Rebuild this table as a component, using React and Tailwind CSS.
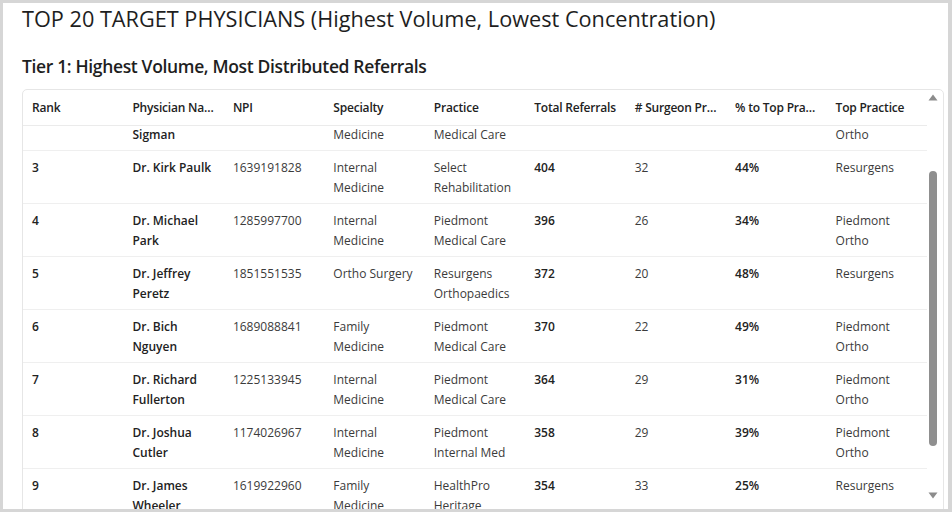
import React from "react";

const rows = [
  { rank: 3, name: ["Dr. Kirk Paulk"], npi: "1639191828", spec: ["Internal", "Medicine"], prac: ["Select", "Rehabilitation"], total: 404, surg: 32, pct: "44%", top: ["Resurgens"] },
  { rank: 4, name: ["Dr. Michael", "Park"], npi: "1285997700", spec: ["Internal", "Medicine"], prac: ["Piedmont", "Medical Care"], total: 396, surg: 26, pct: "34%", top: ["Piedmont", "Ortho"] },
  { rank: 5, name: ["Dr. Jeffrey", "Peretz"], npi: "1851551535", spec: ["Ortho Surgery"], prac: ["Resurgens", "Orthopaedics"], total: 372, surg: 20, pct: "48%", top: ["Resurgens"] },
  { rank: 6, name: ["Dr. Bich", "Nguyen"], npi: "1689088841", spec: ["Family", "Medicine"], prac: ["Piedmont", "Medical Care"], total: 370, surg: 22, pct: "49%", top: ["Piedmont", "Ortho"] },
  { rank: 7, name: ["Dr. Richard", "Fullerton"], npi: "1225133945", spec: ["Internal", "Medicine"], prac: ["Piedmont", "Medical Care"], total: 364, surg: 29, pct: "31%", top: ["Piedmont", "Ortho"] },
  { rank: 8, name: ["Dr. Joshua", "Cutler"], npi: "1174026967", spec: ["Internal", "Medicine"], prac: ["Piedmont", "Internal Med"], total: 358, surg: 29, pct: "39%", top: ["Piedmont", "Ortho"] },
  { rank: 9, name: ["Dr. James", "Wheeler"], npi: "1619922960", spec: ["Family", "Medicine"], prac: ["HealthPro", "Heritage"], total: 354, surg: 33, pct: "25%", top: ["Resurgens"] },
];

const headers = ["Rank", "Physician Name", "NPI", "Specialty", "Practice", "Total Referrals", "# Surgeon Practices", "% to Top Practice", "Top Practice"];

function Cell({ children, bold }) {
  return (
    <div className={`pl-[9px] pr-[6px] ${bold ? "font-semibold text-[#222]" : "text-[#3b3b3b]"}`}>
      {Array.isArray(children) ? children.map((l, i) => <div key={i}>{l}</div>) : children}
    </div>
  );
}

export default function App() {
  return (
    <div
      className="w-[952px] h-[512px] bg-white border-t-[3px] border-l-[3px] border-r-[4px] border-b-[3px] border-[#d6d6d6] overflow-hidden"
      style={{ fontFamily: "'Open Sans', 'Noto Sans', sans-serif" }}
    >
      <div className="pl-[19px] pt-px">
        <h1 className="text-[21.7px] leading-[30px] text-[#1e1e1e]">
          TOP 20 TARGET PHYSICIANS (Highest Volume, Lowest Concentration)
        </h1>
        <h2 className="mt-[20px] text-[17.5px] leading-[24px] font-semibold tracking-[-0.35px] text-[#1e1e1e]">
          Tier 1: Highest Volume, Most Distributed Referrals
        </h2>

        {/* table + scrollbar */}
        <div className="mt-[11px] w-[922px] h-[460px] flex border border-[#e6e6e6] rounded-[5px] overflow-hidden text-[12px] leading-[20px]">
          <div className="w-[904px] flex flex-col">
            <div className="grid grid-cols-9 h-[36px] pt-[8px] border-b border-[#ebebeb] font-semibold text-[#222] tracking-[-0.2px]">
              {headers.map((h) => (
                <div key={h} className="pl-[9px] pr-[8px] truncate">{h}</div>
              ))}
            </div>
            {/* row 2, scrolled mostly out of view */}
            <div className="grid grid-cols-9 h-[25px] leading-[18px] border-b border-[#efefef]">
              <Cell />
              <Cell bold>Sigman</Cell>
              <Cell />
              <Cell>Medicine</Cell>
              <Cell>Medical Care</Cell>
              <Cell />
              <Cell />
              <Cell />
              <Cell>Ortho</Cell>
            </div>
            {rows.map((r) => (
              <div key={r.rank} className="grid grid-cols-9 h-[53px] shrink-0 pt-[7px] border-b border-[#efefef]">
                <Cell bold>{r.rank}</Cell>
                <Cell bold>{r.name}</Cell>
                <Cell>{r.npi}</Cell>
                <Cell>{r.spec}</Cell>
                <Cell>{r.prac}</Cell>
                <Cell bold>{r.total}</Cell>
                <Cell>{r.surg}</Cell>
                <Cell bold>{r.pct}</Cell>
                <Cell>{r.top}</Cell>
              </div>
            ))}
          </div>
          <div className="flex-1 flex flex-col items-center pt-[3px] pr-[4px]">
            <svg width="10" height="7" viewBox="0 0 10 7" className="mt-[1px]">
              <path d="M5 0.5 L9.5 6.5 L0.5 6.5 Z" fill="#8c8c8c" />
            </svg>
            <div className="mt-[70px] w-[8px] h-[275px] rounded-full bg-[#8f8f8f]" />
            <svg width="10" height="7" viewBox="0 0 10 7" className="mt-[46px]">
              <path d="M0.5 0.5 L9.5 0.5 L5 6.5 Z" fill="#8c8c8c" />
            </svg>
          </div>
        </div>
      </div>
    </div>
  );
}
